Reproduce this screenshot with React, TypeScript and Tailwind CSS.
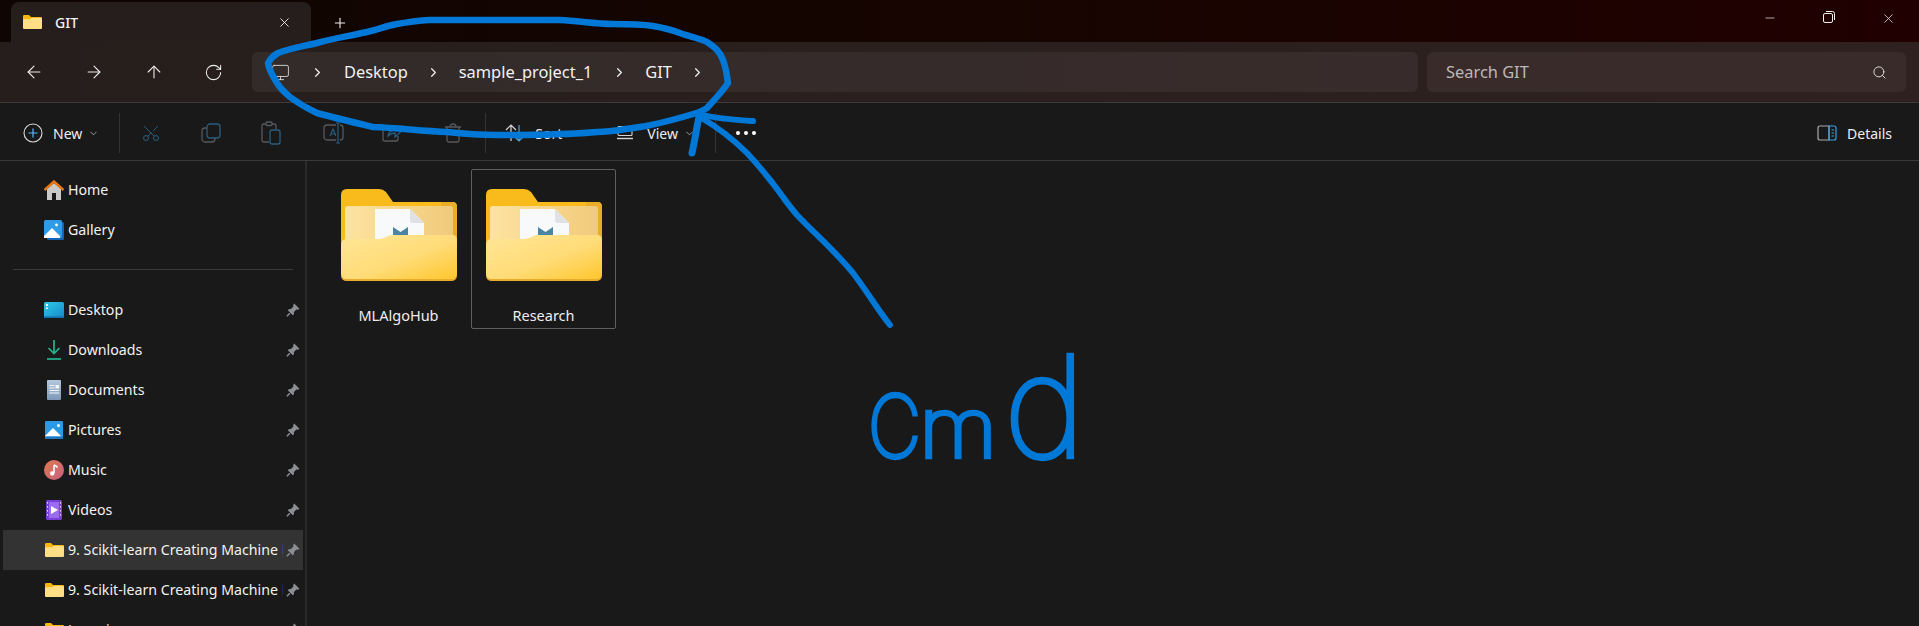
import React from "react";
import { ArrowLeft, ArrowRight, ArrowUp, RotateCw, Monitor, ChevronRight, ChevronDown, Plus, X, Minus, Search, Scissors } from "lucide-react";

function PinIcon() {
  return (
    <svg width="14" height="14" viewBox="0 0 14 14" className="shrink-0">
      <path d="M8.2 0.6 L13.4 5.8 L12 6.8 L10.4 6.6 L8 9 L7.8 11.4 L6.8 12.2 L1.8 7.2 L2.6 6.2 L5 6 L7.4 3.6 L7.2 2 Z" fill="#8b8f94" />
      <path d="M3.8 10.2 L0.8 13.2" stroke="#8b8f94" strokeWidth="1.4" />
    </svg>
  );
}

function SmallFolder() {
  return (
    <svg width="19" height="14" viewBox="0 0 19 14">
      <path d="M0 1.2 Q0 0 1.2 0 H6 L8 2 H18 Q19 2 19 3 V6 H0 Z" fill="#f8b70f" />
      <path d="M0 4.2 H7 L8.6 3 H18 Q19 3 19 4 V13 Q19 14 18 14 H1 Q0 14 0 13 Z" fill="#ffdf85" />
    </svg>
  );
}

function HomeIcon() {
  return (
    <svg width="20" height="20" viewBox="0 0 20 20">
      <path d="M3 9 L10 3 L17 9 V20 H12 V13 H8 V20 H3 Z" fill="#c9c9c9" />
      <path d="M0.5 10 L10 1.5 L19.5 10" stroke="#e8770f" strokeWidth="2.4" fill="none" />
    </svg>
  );
}

function GalleryIcon() {
  return (
    <svg width="20" height="20" viewBox="0 0 20 20">
      <rect x="3" y="2" width="17" height="18" rx="1.5" fill="#1565b8" />
      <rect x="0" y="0" width="18" height="18" rx="1.5" fill="#2d9be8" />
      <path d="M0 16 L8 8 L16 16 V18 H0 Z" fill="#ffffff" />
      <circle cx="12.5" cy="5" r="1.4" fill="#ffffff" />
    </svg>
  );
}

function DesktopIcon() {
  return (
    <svg width="20" height="16" viewBox="0 0 20 16">
      <defs>
        <linearGradient id="dk" x1="0" y1="0" x2="1" y2="1">
          <stop offset="0" stopColor="#2ec9e8" />
          <stop offset="1" stopColor="#1588c9" />
        </linearGradient>
      </defs>
      <rect width="20" height="16" rx="1.5" fill="url(#dk)" />
      <rect x="2" y="2" width="2" height="2" fill="#fff" />
      <rect x="2" y="5.5" width="2" height="1.5" fill="#fff" />
      <rect x="0" y="14.4" width="20" height="1.6" fill="#136fa8" />
    </svg>
  );
}

function DownloadIcon() {
  return (
    <svg width="16" height="20" viewBox="0 0 16 20">
      <path d="M8 0 V13 M2.5 8 L8 13.5 L13.5 8" stroke="#22b58f" strokeWidth="1.7" fill="none" />
      <path d="M1 19 H15" stroke="#22b58f" strokeWidth="1.7" />
    </svg>
  );
}

function DocumentsIcon() {
  return (
    <svg width="14" height="20" viewBox="0 0 14 20">
      <defs>
        <linearGradient id="doc" x1="0" y1="0" x2="0" y2="1">
          <stop offset="0" stopColor="#b5c7dc" />
          <stop offset="1" stopColor="#7d99b8" />
        </linearGradient>
      </defs>
      <rect width="14" height="20" rx="1" fill="url(#doc)" />
      <rect x="2.5" y="5" width="5" height="1" fill="#f3f6fa" />
      <rect x="2.5" y="7.5" width="5" height="1" fill="#f3f6fa" />
      <rect x="8.5" y="5" width="3.5" height="3.5" fill="#f3f6fa" />
      <rect x="2.5" y="10" width="9.5" height="1" fill="#f3f6fa" />
      <rect x="2.5" y="12.5" width="9.5" height="1" fill="#f3f6fa" />
    </svg>
  );
}

function PicturesIcon() {
  return (
    <svg width="18" height="18" viewBox="0 0 18 18">
      <rect width="18" height="18" rx="1.2" fill="#2a9ae6" />
      <path d="M0 15 L8 7 L16 15 V15.5 H0 Z" fill="#ffffff" />
      <rect y="15.5" width="18" height="2.5" fill="#1b78c4" />
      <circle cx="13.5" cy="4.5" r="1.5" fill="#ffffff" />
    </svg>
  );
}

function MusicIcon() {
  return (
    <svg width="20" height="20" viewBox="0 0 20 20">
      <defs>
        <linearGradient id="mus" x1="0" y1="0" x2="1" y2="1">
          <stop offset="0" stopColor="#e0794a" />
          <stop offset="1" stopColor="#c85f86" />
        </linearGradient>
      </defs>
      <circle cx="10" cy="10" r="10" fill="url(#mus)" />
      <path d="M10 5 V13" stroke="#fff" strokeWidth="1.6" />
      <path d="M10 5 Q12 5.5 13.5 7.5" stroke="#fff" strokeWidth="1.6" fill="none" />
      <circle cx="8.2" cy="13.4" r="2.2" fill="#fff" />
    </svg>
  );
}

function VideosIcon() {
  return (
    <svg width="16" height="20" viewBox="0 0 16 20">
      <rect width="16" height="20" rx="1.5" fill="#7a3fd8" />
      <rect x="3" y="2" width="10" height="16" fill="#9a6cf0" />
      <path d="M5 6 L12 10 L5 14 Z" fill="#ffffff" />
      <rect x="1" y="2" width="1" height="1.6" fill="#e4d8fa" />
      <rect x="1" y="6" width="1" height="1.6" fill="#e4d8fa" />
      <rect x="1" y="10" width="1" height="1.6" fill="#e4d8fa" />
      <rect x="1" y="14" width="1" height="1.6" fill="#e4d8fa" />
      <rect x="14" y="2" width="1" height="1.6" fill="#e4d8fa" />
      <rect x="14" y="6" width="1" height="1.6" fill="#e4d8fa" />
      <rect x="14" y="10" width="1" height="1.6" fill="#e4d8fa" />
      <rect x="14" y="14" width="1" height="1.6" fill="#e4d8fa" />
    </svg>
  );
}

function BigFolder({ id }: { id: string }) {
  return (
    <svg width="116" height="92" viewBox="0 0 116 92">
      <defs>
        <linearGradient id={`front${id}`} x1="0" y1="0" x2="1" y2="1">
          <stop offset="0" stopColor="#ffe696" />
          <stop offset="0.55" stopColor="#ffdc78" />
          <stop offset="1" stopColor="#ffc72e" />
        </linearGradient>
        <linearGradient id={`inner${id}`} x1="0" y1="0" x2="1" y2="0">
          <stop offset="0" stopColor="#fde3a0" />
          <stop offset="1" stopColor="#f0ca7c" />
        </linearGradient>
      </defs>
      <path d="M0 6 Q0 0 6 0 H38 Q42 0 45 3 L52 13 H111 Q116 13 116 18 V60 H0 Z" fill="#f9bb1b" />
      <path d="M112 13 Q116 13 116 18 V60 H100 V13 Z" fill="#e9ad27" />
      <rect x="4" y="17" width="108" height="42" rx="3" fill={`url(#inner${id})`} />
      <path d="M34 20 H69 L83 34 V56 H34 Z" fill="#f8f9fb" />
      <path d="M69 20 L83 34 H72 Q69 34 69 31 Z" fill="#dfe1e4" />
      <path d="M52 38 L59.5 43 L67 38 V51 H52 Z" fill="#4a86a3" />
      <path d="M4 50 H40 Q44 50 47 48 Q49 50 116 49 V86 Q116 92 110 92 H6 Q0 92 0 86 V55 Q0 50 4 50 Z" fill="#e8ac2c" />
      <path d="M5 50 H38 Q43 50 46 47.5 Q48 46 52 46 H111 Q116 46 116 51 V84 Q116 90 110 90 H6 Q0 90 0 84 V56 Q0 50 5 50 Z" fill={`url(#front${id})`} />
    </svg>
  );
}

function CopyIcon() {
  return (
    <svg width="20" height="20" viewBox="0 0 20 20" fill="none">
      <rect x="1" y="5" width="13" height="14" rx="3" stroke="#55585c" strokeWidth="1.3" />
      <rect x="6" y="1" width="13" height="14" rx="3" fill="#191919" stroke="#2a5d7d" strokeWidth="1.3" />
    </svg>
  );
}

function PasteIcon() {
  return (
    <svg width="20" height="24" viewBox="0 0 20 24" fill="none">
      <path d="M8 21 H3 Q1 21 1 19 V5 Q1 3 3 3 H13 Q15 3 15 5 V8" stroke="#55585c" strokeWidth="1.3" />
      <rect x="5" y="1" width="6" height="3.5" rx="1" fill="#191919" stroke="#55585c" strokeWidth="1.3" />
      <rect x="9" y="9" width="10" height="14" rx="2" stroke="#2a5d7d" strokeWidth="1.3" />
    </svg>
  );
}

function RenameIcon() {
  return (
    <svg width="22" height="22" viewBox="0 0 22 22" fill="none">
      <rect x="1" y="3" width="19" height="15" rx="3" stroke="#55585c" strokeWidth="1.3" />
      <path d="M7 14 L10 7 L13 14 M8 12 H12" stroke="#2a5d7d" strokeWidth="1.2" />
      <rect x="13" y="0" width="4" height="22" fill="#191919" />
      <path d="M15 1 V21 M13 1 H17 M13 21 H17" stroke="#2a5d7d" strokeWidth="1.2" />
    </svg>
  );
}

function ShareIcon() {
  return (
    <svg width="20" height="20" viewBox="0 0 20 20" fill="none">
      <path d="M7 3 H3 Q1 3 1 5 V16 Q1 18 3 18 H14 Q16 18 16 16 V13" stroke="#55585c" strokeWidth="1.3" />
      <path d="M6 13 Q7 7 13 7 V3 L19 8.5 L13 14 V10 Q9 10 6 13 Z" stroke="#2a5d7d" strokeWidth="1.3" />
    </svg>
  );
}

function TrashIcon() {
  return (
    <svg width="18" height="20" viewBox="0 0 18 20" fill="none">
      <path d="M1 4 H17 M6 4 Q6 1 9 1 Q12 1 12 4" stroke="#55585c" strokeWidth="1.3" />
      <path d="M3 4 V17 Q3 19 5 19 H13 Q15 19 15 17 V4" stroke="#55585c" strokeWidth="1.3" />
      <path d="M7 8 V10 M11 8 V10" stroke="#55585c" strokeWidth="1.3" />
    </svg>
  );
}

function SortIcon() {
  return (
    <svg width="20" height="18" viewBox="0 0 20 18" fill="none">
      <path d="M6 17 V1 M1 6 L6 1 L11 6" stroke="#d5d5d5" strokeWidth="1.2" />
      <path d="M14 1 V17 M9 12 L14 17 L19 12" stroke="#4aa8e8" strokeWidth="1.2" />
    </svg>
  );
}

function ViewIcon() {
  return (
    <svg width="16" height="14" viewBox="0 0 16 14" fill="none">
      <rect x="1" y="0.5" width="14" height="9" rx="1" stroke="#d5d5d5" strokeWidth="1.1" />
      <path d="M0 12.5 H16" stroke="#d5d5d5" strokeWidth="1.4" />
    </svg>
  );
}

function DetailsIcon() {
  return (
    <svg width="20" height="16" viewBox="0 0 20 16" fill="none">
      <path d="M12 1 H3 Q1 1 1 3 V13 Q1 15 3 15 H12 Z" stroke="#a8a8a8" strokeWidth="1.2" />
      <path d="M12 1 H17 Q19 1 19 3 V13 Q19 15 17 15 H12 Z" stroke="#3aa0e0" strokeWidth="1.2" />
      <path d="M14.5 5 H17 M14.5 8 H17 M14.5 11 H17" stroke="#3aa0e0" strokeWidth="1.2" />
    </svg>
  );
}

function RestoreIcon() {
  return (
    <svg width="12" height="12" viewBox="0 0 12 12" fill="none">
      <rect x="0.5" y="2.5" width="9" height="9" rx="1.5" stroke="#f0f0f0" />
      <path d="M3 0.5 H9.5 Q11.5 0.5 11.5 2.5 V9" stroke="#f0f0f0" />
    </svg>
  );
}

function Crumb() {
  return <ChevronRight size={15} strokeWidth={1.9} className="text-[#f2f2f2] shrink-0" />;
}

const pinned: { label: string; icon: React.ReactNode }[] = [
  { label: "Desktop", icon: <DesktopIcon /> },
  { label: "Downloads", icon: <DownloadIcon /> },
  { label: "Documents", icon: <DocumentsIcon /> },
  { label: "Pictures", icon: <PicturesIcon /> },
  { label: "Music", icon: <MusicIcon /> },
  { label: "Videos", icon: <VideosIcon /> },
  { label: "9. Scikit-learn Creating Machine Learning", icon: <SmallFolder /> },
  { label: "9. Scikit-learn Creating Machine Learning", icon: <SmallFolder /> },
  { label: "Learning", icon: <SmallFolder /> },
];

function NavRow({ label, icon, pin, active }: { label: string; icon: React.ReactNode; pin?: boolean; active?: boolean }) {
  return (
    <div className={`h-10 shrink-0 flex items-center ml-[3px] w-[300px] ${active ? "bg-[#333333]" : ""}`}>
      <div className="w-[65px] pl-[40px] pr-[3px] flex justify-center shrink-0">{icon}</div>
      <span className="w-[215px] overflow-hidden whitespace-nowrap text-[14.2px] text-[#f2f2f2] mr-[3px]">{label}</span>
      {pin && <PinIcon />}
    </div>
  );
}

function FolderTile({ id, name, selected }: { id: string; name: string; selected?: boolean }) {
  return (
    <div className={`w-[145px] h-[160px] rounded-[2px] flex flex-col items-center pt-[19px] border ${selected ? "border-[#5f5f5f]" : "border-transparent"}`}>
      <BigFolder id={id} />
      <span className="mt-[24px] text-[14.5px] text-[#eeeeee] leading-5">{name}</span>
    </div>
  );
}

export default function App() {
  return (
    <div className="relative w-[1919px] h-[626px] overflow-hidden bg-[#191919] flex flex-col font-['Noto_Sans',sans-serif]">
      {/* tab strip */}
      <div className="h-[42px] shrink-0 flex items-end bg-gradient-to-r from-[#0f0503] via-[#160500] to-[#200000]">
        <div className="ml-[11px] w-[300px] h-10 rounded-t-lg bg-[#261e1c] flex items-center pl-[12px] pr-[19px]">
          <SmallFolder />
          <span className="ml-[13px] text-[14px] text-[#f2f2f2] font-medium">GIT</span>
          <X size={15} strokeWidth={1.5} className="ml-auto text-[#e8e8e8]" />
        </div>
        <Plus size={16} strokeWidth={1.6} className="ml-[21px] mb-[11px] text-[#eeeeee]" />
        <div className="ml-auto h-[42px] flex items-start pt-[11px] pr-[23px] gap-[46px]">
          <Minus size={14} strokeWidth={1.2} className="text-[#f0f0f0]" />
          <RestoreIcon />
          <X size={15} strokeWidth={1.2} className="text-[#f0f0f0]" />
        </div>
      </div>

      {/* nav bar */}
      <div className="h-[60px] shrink-0 flex items-center bg-gradient-to-r from-[#261e1c] to-[#2e2120] border-b border-[#3d3a39] box-content">
        <div className="w-[252px] flex items-center pl-[24px] gap-[40px] text-[#eeeeee]">
          <ArrowLeft size={20} strokeWidth={1.3} />
          <ArrowRight size={20} strokeWidth={1.3} />
          <ArrowUp size={20} strokeWidth={1.3} />
          <RotateCw size={19} strokeWidth={1.3} />
        </div>
        <div className="w-[1166px] h-10 rounded-md bg-gradient-to-r from-[#322b29] to-[#382b2b] flex items-center pl-[19px] text-[16.4px] text-[#f2f2f2]">
          <Monitor size={19} strokeWidth={1.1} className="text-[#dddddd]" />
          <div className="ml-[20px]"><Crumb /></div>
          <span className="ml-[19px]">Desktop</span>
          <div className="ml-[18px]"><Crumb /></div>
          <span className="ml-[18px]">sample_project_1</span>
          <div className="ml-[20px]"><Crumb /></div>
          <span className="ml-[18px]">GIT</span>
          <div className="ml-[18px]"><Crumb /></div>
        </div>
        <div className="ml-[9px] w-[479px] h-10 rounded-md bg-[#3a2b2b] flex items-center pl-[19px] pr-[19px] text-[16.4px] text-[#bdb8b7]">
          <span>Search GIT</span>
          <Search size={15} strokeWidth={1.4} className="ml-auto text-[#eeeeee]" />
        </div>
      </div>

      {/* command bar */}
      <div className="h-[58px] pt-[3px] shrink-0 flex items-center bg-[#191919] border-b border-[#3a3a3a] box-border text-[14px] text-[#eeeeee]">
        <svg width="20" height="20" viewBox="0 0 20 20" fill="none" className="ml-[23px]">
          <circle cx="10" cy="10" r="9" stroke="#dcdcdc" strokeWidth="1.1" />
          <path d="M10 5.5 V14.5 M5.5 10 H14.5" stroke="#4cc2ff" strokeWidth="1.2" />
        </svg>
        <span className="ml-[10px]">New</span>
        <ChevronDown size={11} strokeWidth={1.5} className="ml-[6px] text-[#cccccc]" />
        <div className="ml-[20px] w-px h-10 bg-[#333333]" />
        <div className="ml-[21px] w-[20px] flex justify-center">
          <Scissors size={20} strokeWidth={1.2} className="text-[#2a5d7d] -rotate-90" />
        </div>
        <div className="ml-[40px]"><CopyIcon /></div>
        <div className="ml-[40px]"><PasteIcon /></div>
        <div className="ml-[42px]"><RenameIcon /></div>
        <div className="ml-[37px]"><ShareIcon /></div>
        <div className="ml-[42px]"><TrashIcon /></div>
        <div className="ml-[23px] w-px h-10 bg-[#333333]" />
        <div className="ml-[19px]"><SortIcon /></div>
        <span className="ml-[10px]">Sort</span>
        <div className="ml-[55px]"><ViewIcon /></div>
        <span className="ml-[14px]">View</span>
        <ChevronDown size={11} strokeWidth={1.5} className="ml-[6px] text-[#cccccc]" />
        <div className="ml-[20px] w-px h-10 bg-[#333333]" />
        <div className="ml-[20px] flex gap-[4px]">
          <span className="w-1 h-1 rounded-full bg-white" />
          <span className="w-1 h-1 rounded-full bg-white" />
          <span className="w-1 h-1 rounded-full bg-white" />
        </div>
        <div className="ml-auto mr-[27px] flex items-center gap-[10px]">
          <DetailsIcon />
          <span>Details</span>
        </div>
      </div>

      {/* body */}
      <div className="flex-1 flex min-h-0">
        <aside className="w-[305px] shrink-0 border-r-2 border-[#2b2b2b] box-content flex flex-col overflow-hidden pt-[9px]">
          <NavRow label="Home" icon={<HomeIcon />} />
          <NavRow label="Gallery" icon={<GalleryIcon />} />
          <div className="mt-[19px] mb-[20px] ml-[13px] w-[280px] h-px shrink-0 bg-[#3b3b3b]" />
          {pinned.map((p, i) => (
            <NavRow key={i} label={p.label} icon={p.icon} pin active={i === 6} />
          ))}
        </aside>
        <main className="flex-1 flex pt-[8px] pl-[19px] items-start">
          <FolderTile id="a" name="MLAlgoHub" />
          <FolderTile id="b" name="Research" selected />
        </main>
      </div>

      {/* ink annotation lying over the window */}
      <svg width="1919" height="626" viewBox="0 0 1919 626" fill="none" className="absolute inset-0 pointer-events-none">
        <g stroke="#0078d7" strokeLinecap="round" strokeLinejoin="round">
          <path strokeWidth="6.5" d="M268 63 C272 56 275 55 278 53 C290 48 305 46 317 43 C335 38 350 36 367 32 C378 30 385 26 397 24 C410 22 418 20 430 20 C450 20 465 20 480 20 C510 20 535 20 560 20 C580 21 595 24 613 24 C628 24 640 24 653 26 C665 28 672 30 680 33 C690 37 700 38 707 42 C716 48 720 52 723 60 C726 68 727 75 728 83 C722 92 714 100 707 108 L700 112 C680 118 660 124 640 127 C625 129 610 132 597 132 C585 133 572 134 560 134 C540 135 520 135 497 135 C480 135 465 134 447 132 C422 131 398 128 373 127 C352 122 335 118 317 113 C306 108 298 103 290 97 C284 92 280 88 277 83 C272 75 269 70 268 63 Z" />
          <path strokeWidth="7" d="M700 112 C697 125 695 140 692 153" />
          <path strokeWidth="6" d="M700 114 C715 119 735 120 753 121" />
          <path strokeWidth="6" d="M700 117 C717 127 733 139 747 153 C760 167 773 183 783 197 C787 203 792 209 797 215 C815 234 836 252 853 273 C866 290 878 310 890 325" />
        </g>
      </svg>
      <div className="absolute left-[868px] top-[336px] flex items-baseline text-[#0078d7] font-['Inter',sans-serif] font-thin leading-none [-webkit-text-stroke:4.5px_#0078d7]">
        <span className="inline-block w-[51px] text-[86px] origin-left scale-x-[0.85]">C</span>
        <span className="inline-block w-[85px] text-[82px] origin-left scale-x-[1.1]">m</span>
        <span className="inline-block w-[80px] text-[140px] origin-left scale-x-[1]">d</span>
      </div>
    </div>
  );
}
